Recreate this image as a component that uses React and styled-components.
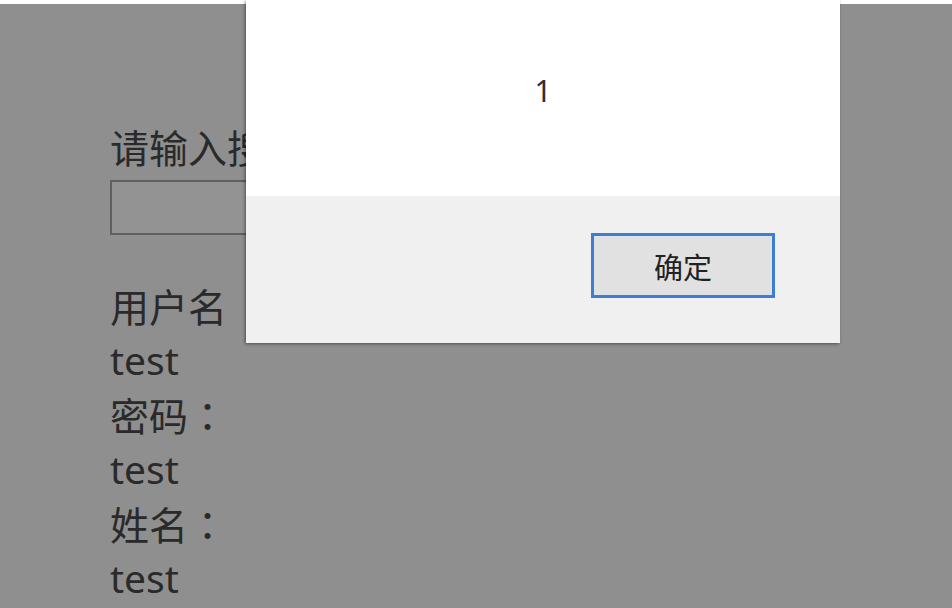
import React from 'react';
import styled, { createGlobalStyle } from 'styled-components';

const GlobalStyle = createGlobalStyle`
  html, body {
    margin: 0;
    padding: 0;
    background: #ffffff;
    overflow: hidden;
  }
  body {
    font-family: "Noto Sans CJK SC", "Noto Sans", sans-serif;
  }
`;

const Screen = styled.div`
  position: relative;
  width: 952px;
  height: 608px;
  overflow: hidden;
  background: #ffffff;
`;

const Page = styled.div`
  margin-top: 4px;
  height: 604px;
  background: #8f8f8f;
  padding: 115px 0 0 110px;
  box-sizing: border-box;
  color: #2a2a2a;
  font-size: 39px;
`;

const Label = styled.div`
  line-height: 54px;
  white-space: nowrap;
`;

const SearchInput = styled.div`
  width: 300px;
  height: 55px;
  margin-top: 7px;
  box-sizing: border-box;
  border: 2px solid #5f5f5f;
  background: #939393;
`;

const Fields = styled.div`
  margin-top: 43px;
  display: flex;
  flex-direction: column;
`;

const Line = styled.div`
  line-height: 54.5px;
  height: 54.5px;
  white-space: nowrap;
  font-family: ${(p) => (p.$latin ? '"Noto Sans", "Open Sans", sans-serif' : '"Noto Sans CJK SC", sans-serif')};
`;

const Colon = styled.span`
  font-family: "Noto Sans CJK TC", sans-serif;
`;

const Dialog = styled.div`
  position: absolute;
  left: 246px;
  top: 0;
  width: 594px;
  display: flex;
  flex-direction: column;
  box-shadow: -1px 1px 3px rgba(0, 0, 0, 0.45);
`;

const DialogBody = styled.div`
  height: 196px;
  background: #ffffff;
  display: flex;
  justify-content: center;
  padding-top: 72px;
  box-sizing: border-box;
  font-family: "Noto Sans", "Open Sans", sans-serif;
  font-size: 30px;
  line-height: 38px;
  color: #2e2e33;
`;

const DialogFooter = styled.div`
  height: 147px;
  background: #f0f0f0;
  display: flex;
  justify-content: flex-end;
  align-items: flex-start;
  padding: 37px 65px 0 0;
  box-sizing: border-box;
`;

const OkButton = styled.button`
  width: 184px;
  height: 65px;
  box-sizing: border-box;
  border: 3px solid #3a7fd2;
  background: #e1e1e1;
  font-family: "Noto Sans CJK SC", sans-serif;
  font-size: 29px;
  color: #222222;
  padding: 0;
  cursor: pointer;
`;

export default function App() {
  return (
    <>
      <GlobalStyle />
      <Screen>
        <Page>
          <Label>请输入搜索用户名</Label>
          <SearchInput />
          <Fields>
            <Line>用户名</Line>
            <Line $latin>test</Line>
            <Line>密码<Colon>：</Colon></Line>
            <Line $latin>test</Line>
            <Line>姓名<Colon>：</Colon></Line>
            <Line $latin>test</Line>
          </Fields>
        </Page>
        <Dialog>
          <DialogBody>1</DialogBody>
          <DialogFooter>
            <OkButton>确定</OkButton>
          </DialogFooter>
        </Dialog>
      </Screen>
    </>
  );
}
